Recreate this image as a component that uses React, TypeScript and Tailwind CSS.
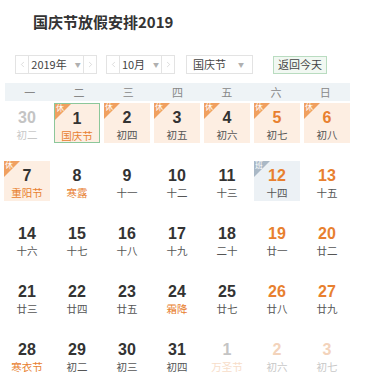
import React from "react";
import { ChevronLeft, ChevronRight } from "lucide-react";

type Day = {
  n: number;
  lunar: string;
  kind?: "rest" | "work";
  weekend?: boolean;
  fest?: boolean;
  other?: boolean;
  today?: boolean;
};

const weekdays = ["一", "二", "三", "四", "五", "六", "日"];

const days: Day[] = [
  { n: 30, lunar: "初二", other: true },
  { n: 1, lunar: "国庆节", kind: "rest", fest: true, today: true },
  { n: 2, lunar: "初四", kind: "rest" },
  { n: 3, lunar: "初五", kind: "rest" },
  { n: 4, lunar: "初六", kind: "rest" },
  { n: 5, lunar: "初七", kind: "rest", weekend: true },
  { n: 6, lunar: "初八", kind: "rest", weekend: true },
  { n: 7, lunar: "重阳节", kind: "rest", fest: true },
  { n: 8, lunar: "寒露", fest: true },
  { n: 9, lunar: "十一" },
  { n: 10, lunar: "十二" },
  { n: 11, lunar: "十三" },
  { n: 12, lunar: "十四", kind: "work", weekend: true },
  { n: 13, lunar: "十五", weekend: true },
  { n: 14, lunar: "十六" },
  { n: 15, lunar: "十七" },
  { n: 16, lunar: "十八" },
  { n: 17, lunar: "十九" },
  { n: 18, lunar: "二十" },
  { n: 19, lunar: "廿一", weekend: true },
  { n: 20, lunar: "廿二", weekend: true },
  { n: 21, lunar: "廿三" },
  { n: 22, lunar: "廿四" },
  { n: 23, lunar: "廿五" },
  { n: 24, lunar: "霜降", fest: true },
  { n: 25, lunar: "廿七" },
  { n: 26, lunar: "廿八", weekend: true },
  { n: 27, lunar: "廿九", weekend: true },
  { n: 28, lunar: "寒衣节", fest: true },
  { n: 29, lunar: "初二" },
  { n: 30, lunar: "初三" },
  { n: 31, lunar: "初四" },
  { n: 1, lunar: "万圣节", other: true, fest: true },
  { n: 2, lunar: "初六", other: true, weekend: true },
  { n: 3, lunar: "初七", other: true, weekend: true },
];

const cjk = { fontFamily: '"Noto Sans CJK SC", "Liberation Sans", sans-serif' };

const Caret = () => <span className="text-[6px] text-[#b0b0b0]">▼</span>;

const SelectBox = ({ label, w }: { label: string; w: string }) => (
  <div className={`flex h-[19px] items-stretch whitespace-nowrap border border-[#e3e3e3] bg-white text-[11px] text-[#444] ${w}`}>
    <span className="flex w-[13px] items-center justify-center border-r border-[#e3e3e3] text-[#c4c4c4]">
      <ChevronLeft className="h-[11px] w-[9px]" strokeWidth={1.5} />
    </span>
    <span className="flex flex-1 items-center justify-center gap-[8px]">
      <span>{label}</span>
      <Caret />
    </span>
    <span className="flex w-[13px] items-center justify-center border-l border-[#e3e3e3] text-[#c4c4c4]">
      <ChevronRight className="h-[11px] w-[9px]" strokeWidth={1.5} />
    </span>
  </div>
);

const Cell = ({ d }: { d: Day }) => {
  const bg = d.kind === "rest" ? "bg-[#fdeee2]" : d.kind === "work" ? "bg-[#ecf1f5]" : "";
  const border = d.today ? "border border-[#8cc79a]" : "";
  let num = "text-[#333]";
  if (d.weekend) num = "text-[#e8802f]";
  if (d.other) num = d.weekend ? "text-[#f3d3bb]" : "text-[#c4c4c4]";
  let lunar = "text-[#555]";
  if (d.fest) lunar = "text-[#e8802f]";
  if (d.other) lunar = d.fest ? "text-[#f7ddc9]" : "text-[#c8c8c8]";
  return (
    <div className={`relative flex h-[40px] flex-col items-center ${bg} ${border}`}>
      {d.kind && (
        <div
          className={`absolute left-0 top-0 h-[16px] w-[16px] ${d.kind === "rest" ? "bg-[#f0a060]" : "bg-[#a9b8c6]"}`}
          style={{ clipPath: "polygon(0 0, 100% 0, 0 100%)" }}
        >
          <span className="absolute left-[1px] top-[-2px] text-[8px] leading-[12px] text-white" style={cjk}>
            {d.kind === "rest" ? "休" : "班"}
          </span>
        </div>
      )}
      <span
        className={`mt-[5px] text-[16px] font-bold leading-[20px] ${num}`}
        style={{ fontFamily: '"Liberation Sans", Arial, sans-serif' }}
      >
        {d.n}
      </span>
      <span className={`text-[10.5px] leading-[13px] ${lunar}`} style={cjk}>
        {d.lunar}
      </span>
    </div>
  );
};

export default function App() {
  return (
    <div className="h-[387px] w-[374px] bg-white" style={cjk}>
      <h1 className="pl-[33px] pt-[11px] text-[15px] font-bold leading-[22px] text-[#333]">国庆节放假安排2019</h1>

      <div className="mt-[22px] flex items-center pl-[15px]">
        <SelectBox label="2019年" w="w-[82px]" />
        <div className="ml-[9px]">
          <SelectBox label="10月" w="w-[69px]" />
        </div>
        <div className="ml-[11px] flex h-[19px] w-[67px] items-center justify-between border border-[#e3e3e3] pl-[6px] pr-[8px] text-[11px] text-[#444]">
          <span>国庆节</span>
          <Caret />
        </div>
        <div className="ml-[20px] flex h-[18px] items-center border border-[#b9dcc0] bg-[#f1f8f2] px-[4px] text-[11px] text-[#444]">
          返回今天
        </div>
      </div>

      <div className="ml-[5px] mt-[9px] grid h-[18px] w-[345px] grid-cols-7 bg-[#eef3f6] text-[11px] text-[#888]">
        {weekdays.map((w) => (
          <div key={w} className="flex items-center justify-center">
            {w}
          </div>
        ))}
      </div>

      <div className="ml-[4px] mt-[2px] grid w-[346px] grid-cols-7 gap-x-[4px] gap-y-[18px]">
        {days.map((d, i) => (
          <Cell key={i} d={d} />
        ))}
      </div>
    </div>
  );
}
